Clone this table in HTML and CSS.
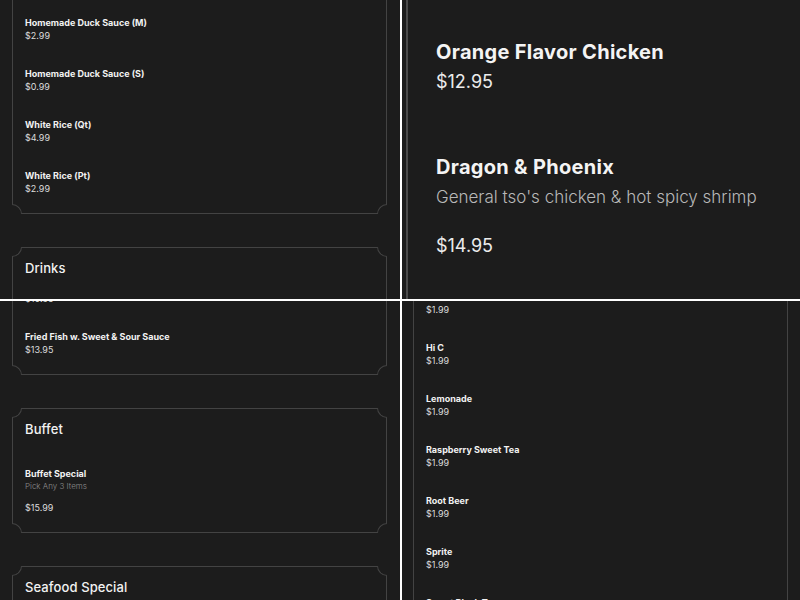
FILE: index.html
```html
<!DOCTYPE html>
<html lang="en">
<head>
<meta charset="utf-8">
<title>Menu</title>
<link rel="stylesheet" href="styles.css">
</head>
<body>
<div class="collage">

  <section class="tile tile-tl">
    <div class="page">
      <div class="card card-cont">
        <div class="item"><div class="name">Homemade Duck Sauce (M)</div><div class="price">$2.99</div></div>
        <div class="item"><div class="name">Homemade Duck Sauce (S)</div><div class="price">$0.99</div></div>
        <div class="item"><div class="name">White Rice (Qt)</div><div class="price">$4.99</div></div>
        <div class="item"><div class="name">White Rice (Pt)</div><div class="price">$2.99</div></div>
        <span class="nc nc-bl"></span><span class="nc nc-br"></span>
      </div>
      <div class="card card-open">
        <h2 class="card-title">Drinks</h2>
        <span class="nc nc-tl"></span><span class="nc nc-tr"></span>
      </div>
    </div>
  </section>

  <section class="tile tile-tr">
    <div class="big-card">
      <div class="big-item">
        <div class="big-name">Orange Flavor Chicken</div>
        <div class="big-price">$12.95</div>
      </div>
      <div class="big-item">
        <div class="big-name">Dragon &amp; Phoenix</div>
        <div class="big-desc">General tso's chicken &amp; hot spicy shrimp</div>
        <div class="big-price with-desc">$14.95</div>
      </div>
    </div>
  </section>

  <section class="tile tile-bl">
    <div class="page">
      <div class="card card-cont">
        <div class="item"><div class="price">$10.95</div></div>
        <div class="item"><div class="name">Fried Fish w. Sweet &amp; Sour Sauce</div><div class="price">$13.95</div></div>
        <span class="nc nc-bl"></span><span class="nc nc-br"></span>
      </div>
      <div class="card">
        <h2 class="card-title">Buffet</h2>
        <div class="item">
          <div class="name">Buffet Special</div>
          <div class="desc">Pick Any 3 Items</div>
          <div class="price with-desc">$15.99</div>
        </div>
        <span class="nc nc-tl"></span><span class="nc nc-tr"></span>
        <span class="nc nc-bl"></span><span class="nc nc-br"></span>
      </div>
      <div class="card card-open">
        <h2 class="card-title">Seafood Special</h2>
        <span class="nc nc-tl"></span><span class="nc nc-tr"></span>
      </div>
    </div>
  </section>

  <section class="tile tile-br">
    <div class="page">
      <div class="card card-cont">
        <div class="item"><div class="price">$1.99</div></div>
        <div class="item"><div class="name">Hi C</div><div class="price">$1.99</div></div>
        <div class="item"><div class="name">Lemonade</div><div class="price">$1.99</div></div>
        <div class="item"><div class="name">Raspberry Sweet Tea</div><div class="price">$1.99</div></div>
        <div class="item"><div class="name">Root Beer</div><div class="price">$1.99</div></div>
        <div class="item"><div class="name">Sprite</div><div class="price">$1.99</div></div>
        <div class="item"><div class="name">Sweet Black Tea</div><div class="price">$1.99</div></div>
      </div>
    </div>
  </section>

</div>
</body>
</html>
```

FILE: styles.css
```css
* { box-sizing: border-box; }

html, body {
  margin: 0;
  padding: 0;
  background: #ffffff;
}

body {
  font-family: "Inter", "Noto Sans", "DejaVu Sans", sans-serif;
  color: #f2f2f2;
}

.collage {
  display: grid;
  width: 800px;
  height: 600px;
  grid-template-columns: 400px 398px;
  grid-template-rows: 299px 299px;
  gap: 2px;
}

.tile {
  background: #1c1c1c;
  overflow: hidden;
}

/* ---------- small menu page ---------- */
.page {
  display: flex;
  flex-direction: column;
  gap: 33px;
}

.tile-tl .page { padding: 0 13px 0 12px; }
.tile-bl .page { padding: 0 13px 0 12px; margin-top: -9px; }
.tile-br .page { padding: 0 12px 0 11px; }

.card {
  position: relative;
  border: 1px solid #434343;
  padding: 11px 12px 18px 12px;
}

.card-cont {
  border-top: none;
  padding-top: 0;
}
.tile-tl .card-cont { padding-top: 16px; }
.tile-br .card-cont { padding-top: 2px; }

.card-open {
  min-height: 80px;
}

.card-title {
  margin: 0 0 29px 0;
  font-size: 13px;
  line-height: 18px;
  font-weight: 500;
  letter-spacing: 0.1px;
  color: #f2f2f2;
}

.item + .item { margin-top: 25px; }

.name {
  font-size: 9px;
  line-height: 13px;
  font-weight: 700;
  color: #f2f2f2;
}

.price {
  font-size: 9px;
  line-height: 13px;
  font-weight: 400;
  color: #dcdcdc;
}

.desc {
  font-size: 8px;
  line-height: 13px;
  font-weight: 300;
  color: #8c8c8c;
}

.price.with-desc { margin-top: 8px; }

/* notched corners */
.nc {
  position: absolute;
  width: 10px;
  height: 10px;
  background: #1c1c1c;
  border: 0 solid #434343;
}
.nc-tl { top: -1px; left: -1px; border-right-width: 1px; border-bottom-width: 1px; border-bottom-right-radius: 10px; }
.nc-tr { top: -1px; right: -1px; border-left-width: 1px; border-bottom-width: 1px; border-bottom-left-radius: 10px; }
.nc-bl { bottom: -1px; left: -1px; border-right-width: 1px; border-top-width: 1px; border-top-right-radius: 10px; }
.nc-br { bottom: -1px; right: -1px; border-left-width: 1px; border-top-width: 1px; border-top-left-radius: 10px; }

/* ---------- zoomed page (top right) ---------- */
.big-card {
  height: 100%;
  margin-left: 4px;
  border-left: 2px solid #4a4a4a;
  padding: 37px 0 0 28px;
  display: flex;
  flex-direction: column;
  gap: 55px;
}

.big-name {
  font-size: 20px;
  line-height: 30px;
  font-weight: 700;
  letter-spacing: 0.3px;
  color: #f4f4f4;
}

.big-price {
  font-size: 18px;
  line-height: 30px;
  font-weight: 400;
  color: #ececec;
}

.big-desc {
  font-size: 17px;
  line-height: 30px;
  font-weight: 300;
  color: #b8b8b8;
}

.big-price.with-desc { margin-top: 19px; }
```
